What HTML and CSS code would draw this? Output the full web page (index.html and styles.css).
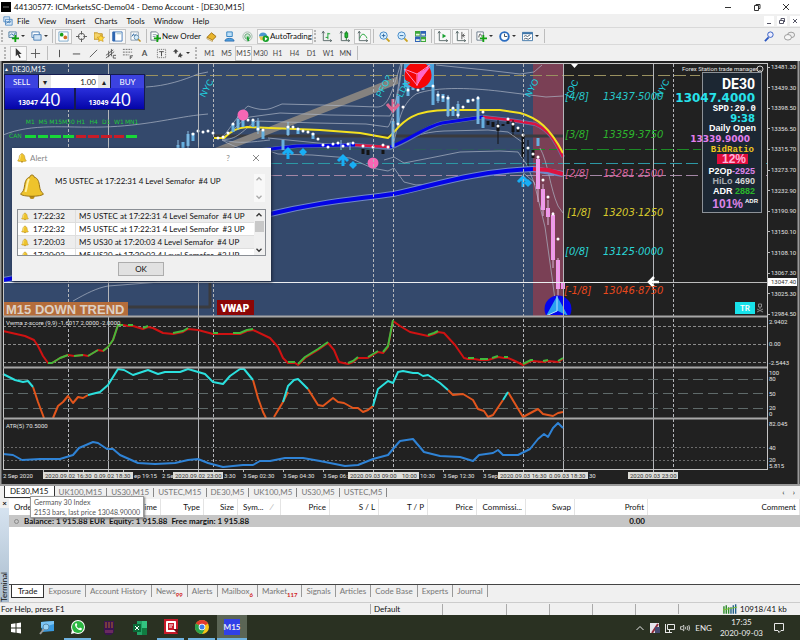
FILE: index.html
```html
<!DOCTYPE html>
<html lang="en">
<head>
  <meta charset="utf-8">
  <title>44130577: ICMarketsSC-Demo04 - Demo Account - [DE30,M15]</title>
  <link rel="stylesheet" href="styles.css">
</head>
<body>
  <!-- Icons that are used more than once -->
  <svg class="defs" width="0" height="0">
    <symbol id="bell" viewBox="0 0 26 26">
      <circle cx="13" cy="22.500" r="2.500" fill="#b98a12"/>
      <path d="M13 1c1.500 0 2 1 2 2 4 1 5 5 5.500 9s1.500 6 4 8c-2 3-21 3-23 0 2.500-2 3.500-4 4-8S7 4 11 3c0-1 .5-2 2-2z" fill="#eec32c" stroke="#9a7415"/>
      <path d="M10 5c-2 3-2 9-3.500 13" fill="none" stroke="#fff0a0" stroke-width="2"/>
    </symbol>
    <symbol id="plus" viewBox="0 0 8 8">
      <path d="M3 0h2v3h3v2H5v3H3V5H0V3h3z" fill="#12a012"/>
    </symbol>
    <symbol id="axes" viewBox="0 0 12 12">
      <path d="M2.500 0v10.500H12M1 2.500 2.500.5 4 2.500M10 9l1.500 1.500L10 12" fill="none" stroke="#566"/>
    </symbol>
  </svg>

  <div class="app">
    <header class="titlebar">
      <svg class="app-icon" viewBox="0 0 10 10"><rect width="10" height="10"/><path d="M2 5h6" stroke="#777"/></svg>
      <span class="title">44130577: ICMarketsSC-Demo04 - Demo Account - [DE30,M15]</span>
      <button class="win" aria-label="Minimize"><svg viewBox="0 0 8 8"><path d="M1 4.500h6" /></svg></button>
      <button class="win" aria-label="Restore"><svg viewBox="0 0 8 8"><path d="M1.500 2.500h4v5h-4zM3 2.500v-1h4v4H5.500"/></svg></button>
      <button class="win" aria-label="Close"><svg viewBox="0 0 8 8"><path d="M1 1l6 6M7 1 1 7"/></svg></button>
    </header>

    <nav class="menubar">
      <svg class="icon" viewBox="0 0 12 12"><path d="M1 1h7v6H1zM3 4h8v7H3z" fill="#dcebf8" stroke="#4a86c0"/><path d="M4 9l2-2 2 1 2-2" fill="none" stroke="#2a66a0"/></svg>
      <button>File</button>
      <button>View</button>
      <button>Insert</button>
      <button>Charts</button>
      <button>Tools</button>
      <button>Window</button>
      <button>Help</button>
      <div class="child-controls">
        <button aria-label="Minimize chart"><svg viewBox="0 0 8 8"><path d="M2 6.500h4"/></svg></button>
        <button aria-label="Restore chart"><svg viewBox="0 0 8 8"><path d="M1.500 3.500h4v3h-4zM3 3V1.500h3.500V5"/></svg></button>
        <button aria-label="Close chart"><svg viewBox="0 0 8 8"><path d="M2 2l4 4M6 2 2 6"/></svg></button>
      </div>
    </nav>

    <div class="toolbar">
      <span class="grip"></span>
      <button class="tool drop" aria-label="New chart"><svg viewBox="0 0 12 12"><path d="M1 1h8v6H1z" fill="#e8f2fa" stroke="#4b7a9c"/><path d="M2 5l2-2 2 2 2-3" fill="none" stroke="#2a66a0"/><use href="#plus" x="4" y="4" width="8" height="8"/></svg></button>
      <button class="tool drop" aria-label="Profiles"><svg viewBox="0 0 12 12"><path d="M1 1h8v6H1z" fill="#fff" stroke="#4a7fb5"/><path d="M3 4h8v6H3z" fill="#cfe2f4" stroke="#4a7fb5"/></svg></button>
      <span class="sep"></span>
      <button class="tool on" aria-label="Market Watch"><svg viewBox="0 0 12 12"><path d="M1 1h10v10H1z" fill="#fff" stroke="#7aa6c8"/><circle cx="4" cy="4" r="2" fill="#18a018"/><circle cx="8" cy="7" r="2" fill="#d07020"/></svg></button>
      <button class="tool" aria-label="Data Window"><svg viewBox="0 0 12 12"><circle cx="6" cy="6" r="3.500" fill="none" stroke="#555"/><path d="M6 0v4M6 8v4M0 6h4M8 6h4" stroke="#555"/></svg></button>
      <button class="tool" aria-label="Navigator"><svg viewBox="0 0 12 12"><path d="M0 2h4l1 1h4v6H0z" fill="#f5d46a" stroke="#c09020"/><path d="M7.500 4l1.200 2.500 2.800.3-2 2 .5 2.700-2.500-1.300L5 11.500l.5-2.700-2-2 2.800-.3z" fill="#ffd83a" stroke="#c08a10" stroke-width=".6"/></svg></button>
      <button class="tool on" aria-label="Terminal"><svg viewBox="0 0 12 12"><path d="M1 1h10v10H1z" fill="#fff" stroke="#3f76b8"/><path d="M2 1v10" stroke="#2f66b0" stroke-width="3"/><path d="M5 3h5" stroke="#9bb"/></svg></button>
      <button class="tool" aria-label="Strategy Tester"><svg viewBox="0 0 12 12"><path d="M1 1h8v9H1z" fill="#fff" stroke="#89a"/><path d="M2 6l2-3 1 3 2-3" fill="none" stroke="#2a66a0"/><circle cx="7" cy="7" r="2.500" fill="#d6ecfa" stroke="#6b93b0"/><path d="M9 9l2.500 2.500" stroke="#c09020" stroke-width="1.500"/></svg></button>
      <span class="sep"></span>
      <button class="tool text"><svg viewBox="0 0 12 12"><path d="M1 1h6l2 2v7H1z" fill="#fff" stroke="#678"/><path d="M3 4h4M3 6h3" stroke="#89a"/><use href="#plus" x="4" y="4" width="8" height="8"/></svg>New Order</button>
      <button class="tool" aria-label="MetaEditor"><svg viewBox="0 0 12 12"><path d="M1 7l5-5 5 4-4 4z" fill="#e9b52c" stroke="#9a6a0c"/><path d="M1 7l6 3v1.500L1 8.500z" fill="#fff4c0" stroke="#9a6a0c" stroke-width=".5"/></svg></button>
      <button class="tool" aria-label="Community"><svg viewBox="0 0 12 12"><path d="M3 1h6v5H3z" fill="#bfe0f8" stroke="#2f7fc0"/><path d="M1 11c0-4 10-4 10 0z" fill="#4aa0e0" stroke="#2f6fb0"/></svg></button>
      <button class="tool" aria-label="Signals"><svg viewBox="0 0 12 12"><circle cx="6" cy="6" r="5" fill="none" stroke="#9fb8a8"/><circle cx="6" cy="6" r="3" fill="#cfe8d4" stroke="#5fa070"/><path d="M6 6l1 5" stroke="#18a030" stroke-width="2"/></svg></button>
      <button class="tool text on"><svg viewBox="0 0 12 12"><path d="M1 6c0-6 9-6 9 0z" fill="#4b97d0"/><path d="M1 6h9l-2 4H3z" fill="#eec24a"/><circle cx="8.500" cy="8.500" r="3.500" fill="#16a028"/><path d="M7.500 6.500v4l3-2z" fill="#fff"/></svg>AutoTrading</button>
      <span class="grip"></span>
      <button class="tool" aria-label="Bar chart"><svg viewBox="0 0 12 12"><use href="#axes" width="12" height="12"/><path d="M7.500 2v7M7.500 3H10M5 7h2.500" stroke="#18a030" fill="none"/></svg></button>
      <button class="tool" aria-label="Candlesticks"><svg viewBox="0 0 12 12"><use href="#axes" width="12" height="12"/><path d="M8 0v10" stroke="#147a20"/><path d="M6.500 2h3v5h-3z" fill="#20c030" stroke="#147a20"/></svg></button>
      <button class="tool on" aria-label="Line chart"><svg viewBox="0 0 12 12"><use href="#axes" width="12" height="12"/><path d="M3 8c2-6 5-6 8 0" stroke="#18a030" fill="none"/></svg></button>
      <span class="sep"></span>
      <button class="tool" aria-label="Zoom in"><svg viewBox="0 0 12 12"><path d="M8 8l3.500 3.500" stroke="#c8a020" stroke-width="2"/><circle cx="5" cy="5" r="4" fill="#d8efff" stroke="#3b83c4"/><path d="M3 5h4M5 3v4" stroke="#2a66a0"/></svg></button>
      <button class="tool" aria-label="Zoom out"><svg viewBox="0 0 12 12"><path d="M8 8l3.500 3.500" stroke="#c8a020" stroke-width="2"/><circle cx="5" cy="5" r="4" fill="#d8efff" stroke="#3b83c4"/><path d="M3 5h4" stroke="#2a66a0"/></svg></button>
      <button class="tool" aria-label="Tile windows"><svg viewBox="0 0 12 12"><path d="M0 0h6v6H0zM6 6h6v6H6z" fill="#3da83a"/><path d="M6 0h6v6H6zM0 6h6v6H0z" fill="#2f62b8"/><path d="M1 3h4v2H1zM7 3h4v2H7zM1 9h4v2H1zM7 9h4v2H7z" fill="#e8f4e0"/></svg></button>
      <span class="sep"></span>
      <button class="tool on" aria-label="Auto scroll"><svg viewBox="0 0 12 12"><use href="#axes" width="12" height="12"/><path d="M6 3v5l4-2.500z" fill="#18a030"/></svg></button>
      <button class="tool on" aria-label="Chart shift"><svg viewBox="0 0 12 12"><use href="#axes" width="12" height="12"/><path d="M7.500 1v8M11 5H8M10 3 8 5l2 2" stroke="#555" fill="none"/></svg></button>
      <span class="sep"></span>
      <button class="tool drop" aria-label="Indicators"><svg viewBox="0 0 12 12"><path d="M1 1h7v9H1z" fill="#fff" stroke="#678"/><path d="M3 7c1-5 2-5 3-1" fill="none" stroke="#444"/><use href="#plus" x="4" y="4" width="8" height="8"/></svg></button>
      <button class="tool drop" aria-label="Periods"><svg viewBox="0 0 12 12"><circle cx="6" cy="6" r="4.700" fill="#fff" stroke="#2a6cc0" stroke-width="2"/><path d="M6 3v3h3" fill="none" stroke="#345"/></svg></button>
      <button class="tool drop" aria-label="Templates"><svg viewBox="0 0 12 12"><path d="M.5 1.500h11v9H.5z" fill="#fff" stroke="#3f76a8"/><path d="M.5 2.500h11" stroke="#3f76a8" stroke-width="2"/><path d="M2 6l2-1 2 1 3-2M2 9l2-1 3 1 3-2" fill="none" stroke="#456"/></svg></button>
      <span class="sep"></span>
      <div class="right-tools">
        <button class="tool" aria-label="Search"><svg viewBox="0 0 12 12"><path d="M5 7 1 11" stroke="#2a56c0" stroke-width="2"/><circle cx="7" cy="4" r="3" fill="#eef" stroke="#2a56c0"/></svg></button>
        <button class="tool" aria-label="Chat"><svg viewBox="0 0 14 12"><ellipse cx="9" cy="4" rx="4.500" ry="3.500" fill="#eee" stroke="#888"/><ellipse cx="5" cy="7" rx="4.500" ry="3.500" fill="#f6f6f6" stroke="#888"/></svg></button>
      </div>
    </div>

    <div class="toolbar periods">
      <span class="grip"></span>
      <button class="tool on" aria-label="Cursor"><svg viewBox="0 0 12 12"><path d="M3 0v9l2-2 2 4 1.500-.7-2-3.800h3z" fill="#333"/></svg></button>
      <button class="tool" aria-label="Crosshair"><svg viewBox="0 0 12 12"><path d="M6 1v10M1 6h10" stroke="#555"/></svg></button>
      <span class="sep"></span>
      <button class="tool" aria-label="Vertical line"><svg viewBox="0 0 12 12"><path d="M6 2v8" stroke="#444"/></svg></button>
      <button class="tool" aria-label="Horizontal line"><svg viewBox="0 0 12 12"><path d="M2 6.500h8" stroke="#444"/></svg></button>
      <button class="tool" aria-label="Trendline"><svg viewBox="0 0 12 12"><path d="M2 10l8-8" stroke="#555"/></svg></button>
      <button class="tool" aria-label="Channel"><svg viewBox="0 0 12 12"><path d="M1 8l8-6M1 11l9-7M4 3v7M7 1v8M9 8h3M9 11h3M9 8v3" stroke="#555" fill="none"/></svg></button>
      <button class="tool" aria-label="Fibonacci"><svg viewBox="0 0 12 12"><path d="M1 1.500h10M1 4.500h10M1 7.500h7" stroke="#666" stroke-dasharray="2 1"/><path d="M9 12V8.500h3M9 10h2" stroke="#555" fill="none"/></svg></button>
      <button class="tool letter">A</button>
      <button class="tool" aria-label="Text label"><svg viewBox="0 0 12 12"><path d="M1.500 1.500h9v9h-9z" fill="none" stroke="#666" stroke-dasharray="1 1"/><path d="M3.500 4h5M6 4v5" stroke="#444" fill="none"/></svg></button>
      <button class="tool drop" aria-label="Arrows"><svg viewBox="0 0 12 12"><path d="M3 1l3 3H4v2H2V4H0zM8 5l1 2 2 .5-2 1.500v2L7.500 9.500 5.500 10l.5-2z" fill="#444"/></svg></button>
      <span class="grip"></span>
      <button class="tf">M1</button>
      <button class="tf">M5</button>
      <button class="tf on">M15</button>
      <button class="tf">M30</button>
      <button class="tf">H1</button>
      <button class="tf">H4</button>
      <button class="tf">D1</button>
      <button class="tf">W1</button>
      <button class="tf">MN</button>
      <span class="sep"></span>
    </div>

    <main class="chart-window">
      <svg class="chart" viewBox="0 61 800 423">
        <defs>
          <clipPath id="price-area"><rect x="3" y="64" width="764" height="251"/></clipPath>
        </defs>
        <rect x="0" y="61" width="800" height="423" fill="#212121"/>
        <rect x="3" y="64" width="530" height="252" fill="#34496c"/>
        <rect x="533" y="64" width="30" height="252" fill="#7a4055"/>

        <g clip-path="url(#price-area)">
          <!-- levels -->
          <path d="M127 307h83M210 282v26M213 136h350" stroke="#3a3b3e" stroke-width="3"/>
          <path d="M215 148 398 76v8L218 154z" fill="#85827f"/>
          <path d="M146 75.500h554" stroke="#9a9160" stroke-dasharray="12 4"/>
          <path d="M404 64h30v23h-30z" fill="#4ba3dc"/>
          <path d="M270 149.500h263" stroke="#2c5a5c" stroke-dasharray="12 4"/>
          <path d="M533 149.500h168" stroke="#1c8a26" stroke-dasharray="12 4"/>
          <path d="M270 163.500h497" stroke="#2c98a5" stroke-dasharray="12 4"/>
          <path d="M270 175.500h497" stroke="#a487a5" stroke-dasharray="12 4"/>

          <!-- bands -->
          <g fill="none" stroke="#aeb6c6" stroke-width=".7">
            <path d="M146 87c20-1 38-7 52-13l10-2"/>
            <path d="M3 135c30-12 60-7 100-8s70-9 95-12l10-1"/>
            <path d="M222 138c10-12 18-26 26-32 8 3 16 5 24 2l10-4 40 1 55 2c10 0 14-10 24-44"/>
            <path d="M222 138c12-6 20-20 28-21l30-4 50 2 60 1c8-14 10-34 12-52"/>
            <path d="M222 139c14 2 20-8 34-18l60 2 50 1 22 3c6-8 10-40 14-64"/>
            <path d="M222 140c14 8 30 14 48 8M222 140c18 4 30 2 48 0"/>
            <path d="M436 65l50 5 34 4 14-2 8-7"/>
            <path d="M394 141c5-18 6-36 22-47 20-8 60-6 90-2l40 5 17-1"/>
            <path d="M268 138l60 6 40 3 24-1c16-8 30-14 52-15l44-1 20 2 14 10"/>
            <path d="M266 150l12 4 34 1 38 3 22 10 16 3 6-3 10 14 12 3 14-1"/>
            <path d="M384 160l10-3 10 6 26-5 30-6 40-1 18 1 9 13 8 20"/>
            <path d="M430 184l50-9 40-5 14 12 11 45 7 50 5 38"/>
            <path d="M540 148c8 14 10 40 18 58l5 7"/>
            <path d="M73 301c14-8 24-13 35-15l52-4"/>
          </g>

          <!-- averages -->
          <g fill="none" stroke-linejoin="round">
            <path d="M3 280c130-22 180-48 267-66 50-12 80-14 123-20 40-8 75-22 140-25l30 5" stroke="#7088c8" stroke-width="6"/>
            <path d="M3 280c130-22 180-48 267-66 50-12 80-14 123-20 40-8 75-22 140-25" stroke="#0404e6" stroke-width="4"/>
            <path d="M533 169l15 1 15 4" stroke="#dc1440" stroke-width="4"/>
            <path d="M262 150l35-4 58-1 35 3c18-6 34-20 52-25l41-6 27 3 25 4c14 6 20 16 28 33" stroke="#6078b0" stroke-width="4"/>
            <path d="M262 150l35-4 58-1M390 147c18-6 34-20 52-24l41-6" stroke="#0404e6" stroke-width="3"/>
            <path d="M355 145l35 2M483 117l27 3 25 4c14 6 20 16 28 33" stroke="#dc1440" stroke-width="2.500"/>
            <path d="M214 138h10c8-8 14-10 23-11l23 1 50 2 40 3 28 5c12-10 16-28 60-28h52l20 3c18 5 30 15 43 40" stroke="#f4e120" stroke-width="2"/>
          </g>

          <!-- candles -->
          <path d="M178 145v6M183 142v6M188 134v12M193 133v8M233 124v8M238 119v9M243 115v12M253 120v7M258 121v10M263 131v8M283 140v10M288 126v9M298 128v6M313 133v6M393 121v26M398 96v28M408 86v10M413 82v8M423 82v8M433 87v18M438 94v7M443 94v8M448 97v19M453 108v8M458 104v12M468 99v4M478 98v26M483 117v11M538 138v8" stroke="#66b0e0" stroke-width="3" fill="none"/>
          <path d="M178 140v12M188 131v17M238 116v14M258 118v16M288 122v14M393 118v30M438 91v12M448 95v22M458 101v17M478 96v28M341 140v10M350 142v8" stroke="#8cbce0" stroke-width="1" fill="none"/>
          <path d="M488 121v4M493 122v5M498 124v7M503 124v2M508 121v3M513 122v10M518 128v4M523 135v22M533 150v8M363 149v5M368 150v5M383 150v4" stroke="#141414" stroke-width="3" fill="none"/>
          <path d="M498 120v24M513 120v15M523 130v30M528 140v26" stroke="#141414" stroke-width="1" fill="none"/>
          <path d="M538 159v30M543 189v21M548 208v9M553 215v45M558 260v29M563 282v7" stroke="#f590ee" stroke-width="4" fill="none"/>
          <path d="M538 157v45M543 184v32M548 200v25M553 212v56M558 258v45" stroke="#d9b6d8" stroke-width="1" fill="none"/>
          <path d="M198 131h0M203 132h0M208 131h0M213 133h0M193 134h0M218 138h0M223 137h0M228 133h0M233 124h0M243 119h0M248 120h0M253 120h0M258 129h0M263 130h0M288 127h0M293 127h0M298 129h0M303 131h0M308 132h0M313 134h0M318 139h0M323 145h0M328 147h0M333 144h0M338 143h0M343 146h0M348 144h0M353 143h0M363 146h0M373 147h0M383 145h0M388 147h0M398 124h0M403 107h0M408 90h0M413 84h0M418 90h0M423 83h0M433 86h0M438 95h0M443 97h0M448 98h0M453 108h0M458 115h0M463 107h0M468 101h0M473 100h0M478 98h0M483 112h0M498 126h0M508 119h0M513 124h0M518 128h0M523 135h0M528 148h0M533 154h0M538 157h0M543 180h0M548 197h0M553 214h0M558 239h0" stroke="#fff" stroke-width="3" stroke-linecap="round"/>

          <!-- semafor marks -->
          <g fill="#f767b5"><circle cx="243" cy="115" r="5.500"/><circle cx="373" cy="163" r="5.500"/></g>
          <path d="M393 99v10M387 104l6 7 6-7" stroke="#dc6590" stroke-width="3" fill="none"/>
          <g fill="none" stroke="#18aef5" stroke-width="3">
            <path d="M288 159v-9M283 154l5-5 5 5M343 166v-10M338 161l5-5 5 5M523 187v-9M518 182l5-5 5 5"/>
          </g>
          <path d="M303 148l4 4-4 4-4-4zM353 161l4 4-4 4-4-4zM528 179l4 4-4 4-4-4z" fill="#18aef5"/>
          <circle cx="418" cy="75" r="13.500" fill="#f50505"/>
          <path d="M404 69l13 5 13-9M417 74v12M404 69l13 16 12-20" fill="none" stroke="#ff8ac8"/>
          <path d="M417 84l1-11 13-7z" fill="#ff66c8"/>
          <circle cx="558" cy="309" r="13.500" fill="#0505f0"/>
          <path d="M557 296l11 20-10-5-12 5z" fill="#2aa0f0"/>
          <path d="M557 296v15M557 311l-11 5" stroke="#b8e0ff" fill="none"/>
          <path d="M571 64h7l-3.500 4z" fill="#fff"/>
        </g>

        <!-- session lines -->
        <path d="M108.500 64v408M198.500 64v408M563.500 64v408M653.500 64v408" stroke="#b4b6ba"/>
        <path d="M68.500 64v408M213.500 64v408M373.500 64v408M393.500 64v408M523.500 64v408M673.500 64v408" stroke="#b4b6ba" stroke-dasharray="3 2"/>
        <path d="M3 282.500h764" stroke="#bcbcbc"/>
        <path d="M3 282.500h636" stroke="#eceef0"/>
        <path d="M659 282h-9M654 277l-5 5 5 5" stroke="#fff" stroke-width="2.500" fill="none"/>

        <g class="session">
          <text transform="translate(205 98) rotate(-62)">NYC</text>
          <text transform="translate(381 98) rotate(-62)">PFO?</text>
          <text transform="translate(402 98) rotate(-62)">LDN</text>
          <text transform="translate(530 98) rotate(-62)">NYO</text>
          <text transform="translate(570 98) rotate(-62)">LOC</text>
          <text transform="translate(661 98) rotate(-62)">NYC</text>
        </g>

        <g class="murrey">
          <text x="565" y="100" fill="#27c7c9">[4/8]</text><text x="603" y="100" fill="#27c7c9">13437·5000</text>
          <text x="565" y="138" fill="#2db52d">[3/8]</text><text x="603" y="138" fill="#2db52d">13359·3750</text>
          <text x="565" y="177" fill="#d6609c">[2/8]</text><text x="603" y="177" fill="#d6609c">13281·2500</text>
          <text x="567" y="216" fill="#d8ca2c">[1/8]</text><text x="603" y="216" fill="#d8ca2c">13203·1250</text>
          <text x="565" y="255" fill="#2ad5d5">[0/8]</text><text x="603" y="255" fill="#2ad5d5">13125·0000</text>
          <text x="564" y="294" fill="#e8481c">[-1/8]</text><text x="603" y="294" fill="#e8481c">13046·8750</text>
        </g>

        <!-- symbol info -->
        <text class="axis" x="682" y="71">Forex Station trade manager</text>
        <circle cx="760" cy="69" r="3" fill="none" stroke="#ccc"/><path d="M758.500 70q1.500 1.500 3 0" stroke="#ccc" fill="none" stroke-width=".6"/>
        <rect x="702.500" y="72.500" width="59" height="140" fill="#1c2733" stroke="#8d9298"/>
        <g class="info">
          <text class="symbol" x="755" y="89">DE30</text>
          <text class="price" x="755" y="102">13047.4000</text>
          <text class="mono" x="756" y="111">SPD:20.0</text>
          <text class="clock" x="755" y="122">9:38</text>
          <text x="756" y="131">Daily Open</text>
          <text class="open" x="750" y="142">13339.9000</text>
          <text class="ratio" x="754" y="152">BidRatio</text>
          <rect x="717" y="154" width="31" height="10" fill="#e00c3c"/>
          <text class="percent" x="746" y="163">12%</text>
          <text x="755" y="174">P2Op<tspan fill="#dc84e8">-2925</tspan></text>
          <text x="755" y="184" fill="#a8adb2">HiLo <tspan fill="#d6d6d6">4690</tspan></text>
          <text x="755" y="194">ADR <tspan fill="#2ab52a">2882</tspan></text>
          <text class="total" x="743" y="208">101%</text>
          <text class="sup" x="758" y="203">ADR</text>
        </g>
        <rect x="735" y="302" width="20" height="12" fill="#18e2ea"/>
        <text class="tr" x="745" y="311">TR</text>
        <path d="M758.500 304h3v3h-3zM760 307v2M757 309l6 3M763 309l-6 3" stroke="#888" fill="none"/>

        <!-- trend labels -->
        <rect x="4" y="302" width="124" height="14" fill="#b56d3b"/>
        <text class="trend" x="6" y="314">M15 DOWN TREND</text>
        <rect x="217" y="300" width="37" height="15" fill="#8c0606"/>
        <text class="vwap" x="235" y="312">VWAP</text>

        <!-- sub windows: levels -->
        <path d="M3 326.500h764M3 344.500h764M3 362.500h764" stroke="#8b8b8b" stroke-dasharray="3 2" fill="none"/>
        <path d="M3 379.500h764M3 393.500h764M3 408.500h764" stroke="#5f6a6a" stroke-dasharray="10 5" fill="none"/>
        <path d="M3 447.500h764M3 460.500h764" stroke="#6b6b6b" stroke-dasharray="2 2" fill="none"/>

        <!-- z-score -->
        <g fill="none" stroke-width="2" stroke-linejoin="round">
          <path stroke="#cf1212" d="M3 331l22 5 9 4 4 6 5 10 5 7 4 0 8-5 8-3 6 1 9-1 5 1 10-6 5 1 5-4 5-7 5-15h5l5 1h5l10 3 5-2 5 1 10 5 10 1 10-2 5-3 10 1 15 4h20l7 0 7-3 6-1 17 8 8 9 5 11 5 5h7l3 2 7-7 13-8 10-7 6 7 5 12 9 2 5-2 5-4h10l10-6 5 1 5-6 5-26 7 5 10 6 18 4 6-2 4-2 6 1 11 12 9 13 4 1h6l6 1h8l10-3 6 1h4l7 3 8 4 8-4h2l10 1 5-1 10 1 5-3"/>
          <path stroke="#43b83c" d="M48 363h4l8-5 8-3M74 356l9-1M88 356l10-6M103 351l5-4 5-7 5-15h5M128 325h5M143 328l5-2M173 333l10-2 5-3M213 333h5M233 333h7l7-3 6-1M288 362h7M298 364l7-7 13-8 10-7M348 363l5-2 5-4M368 357l10-6M383 352l5-6 5-26M428 335l6-2 4-2M468 358h6M480 359h8M492 358l6-2M504 357h4M523 364l8-4h2M543 361l5-1M558 361l5-3"/>
        </g>

        <!-- oscillator -->
        <g fill="none" stroke-width="2" stroke-linejoin="round">
          <path stroke="#e2551c" d="M33 387l5 15 6 16M53 418l5-12 5-4 5-6 5 7 5-6 5 1 5-3M253 380l5 18 5 14 3 6M274 417l9-15 5-10M308 389l10 16 5 1 10-8 5 4 6 1 9 5h5l5 4 5-2 5-4M448 390l5 5 10-1 10 6 5 9 6 2 4 6 5-2 10-15M508 392l15 25 15-8 5 5 10 2 5-3 5-1"/>
          <path stroke="#2be0de" d="M3 374l12 6 8 2 5-1 5 6M88 395l12-3 8-7 10-16 6 1 9 5 15-5 10 4 7-2h15l8-3 17 5 8 8 10 2 7-8 10-7h4l9 11M283 402l5-16 6-6 4-1 10 10M373 406l5-17 10-8 5 2 5-11 5-1 10 2h5l5 3 5-1 12 8 8 7M503 400l5-8"/>
        </g>

        <!-- ATR -->
        <path fill="none" stroke="#2f83d6" stroke-width="2" stroke-linejoin="round" d="M3 454L13 455L22 460L40 459L60 459L73 455L79 448L93 442L98 443L107 449L113 449L120 455L138 463L155 464L175 463L188 460L198 459L208 463L223 467L243 465L253 465L260 461L270 461L285 458L303 458L320 461L345 466L358 465L373 459L388 455L393 449L400 441L413 439L424 452L440 456L460 457L473 461L479 455L493 453L498 450L503 455L518 455L530 449L538 439L544 434L548 437L553 428L558 423L563 428"/>

        <!-- window frames -->
        <path d="M3 63.500h764M3.500 63v407M767.500 63v407M3 469.500h764" stroke="#c6c6c6" fill="none"/>
        <path d="M3 316.500h764M3 367.500h764M3 418.500h764" stroke="#a7a7a7" stroke-width="2" fill="none"/>
        <path d="M.5 61v423M798.500 61v423" stroke="#9a9a9a" stroke-width="2"/>

        <g class="axis">
          <text x="6" y="325">Vwma z-score (9,9) -1.6017 2.0000 -2.0000</text>
          <text x="6" y="428">ATR(5) 70.5000</text>
          <text x="771" y="69">13481.30</text>
          <text x="771" y="90">13439.30</text>
          <text x="771" y="110">13398.50</text>
          <text x="771" y="131">13356.50</text>
          <text x="771" y="151">13315.70</text>
          <text x="771" y="172">13273.70</text>
          <text x="771" y="193">13232.90</text>
          <text x="771" y="213">13190.90</text>
          <text x="771" y="234">13150.10</text>
          <text x="771" y="255">13108.10</text>
          <text x="771" y="275">13067.30</text>
          <text x="771" y="296">13025.30</text>
          <text x="771" y="316">12984.50</text>
          <text x="769" y="324">2.9402</text>
          <text x="769" y="346">0.00</text>
          <text x="769" y="365">-2.5443</text>
          <text x="769" y="375">100</text>
          <text x="769" y="381">80</text>
          <text x="769" y="396">50</text>
          <text x="769" y="410">20</text>
          <text x="769" y="416">0</text>
          <text x="769" y="426">82.045</text>
          <text x="769" y="450">40</text>
          <text x="769" y="462">20</text>
          <text x="769" y="468">5.815</text>

          <text x="3" y="478">2 Sep 2020</text>
          <text x="134" y="478">ep 19:15</text>
          <text x="162" y="478">2 Se</text>
          <text x="224" y="478">3:30</text>
          <text x="243" y="478">3 Sep 02:30</text>
          <text x="283" y="478">3 Sep 04:30</text>
          <text x="323" y="478">3 Sep 06:</text>
          <text x="420" y="478">10:30</text>
          <text x="443" y="478">3 Sep 12:30</text>
          <text x="483" y="478">3 Sep</text>
          <text x="589" y="478">30</text>
        </g>
        <rect x="768" y="278" width="29" height="8" fill="#fff"/>
        <text class="axis dark" x="771" y="284">13047.40</text>
        <path d="M767 67.500h3M767 87.500h3M767 108.500h3M767 128.500h3M767 149.500h3M767 170.500h3M767 190.500h3M767 211.500h3M767 231.500h3M767 252.500h3M767 273.500h3M767 293.500h3M767 314.500h3M43.500 470v2M83.500 470v2M123.500 470v2M163.500 470v2M243.500 470v2M283.500 470v2M323.500 470v2M443.500 470v2M483.500 470v2" stroke="#bbb"/>
        <g fill="#dcdcd8">
          <rect x="43" y="472" width="90" height="7"/>
          <rect x="173" y="472" width="50" height="7"/>
          <rect x="348" y="472" width="71" height="7"/>
          <rect x="498" y="472" width="90" height="7"/>
          <rect x="628" y="472" width="50" height="7"/>
        </g>
        <g class="axis dark">
          <text x="45" y="478">2020.09.02 16:30</text><text x="94" y="478">0.09.02 18:30</text>
          <text x="175" y="478">2020.09.02 23:00</text>
          <text x="350" y="478">2020.09.03 09:00</text><text x="402" y="478">10:00</text>
          <text x="500" y="478">2020.09.03 16:30</text><text x="549" y="478">0.09.03 18:30</text>
          <text x="630" y="478">2020.09.03 23:00</text>
        </g>
      </svg>

      <section class="one-click" aria-label="One click trading">
        <div class="pair"><span class="tri">▲</span>DE30,M15</div>
        <div class="order">
          <button class="sell">SELL</button>
          <div class="lots">
            <button aria-label="Less">▾</button>
            <input type="text" value="1.00" aria-label="Volume">
            <button aria-label="More">▴</button>
          </div>
          <button class="buy">BUY</button>
        </div>
        <div class="quotes">
          <div class="quote">13047<b>40</b></div>
          <div class="quote">13049<b>40</b></div>
        </div>
      </section>

      <section class="can">
        <div class="can-row can-names"><span></span><span>M1</span><span>M5</span><span>M15</span><span>M30</span><span>H1</span><span>H4</span><span>D1</span><span>W1</span><span>MN1</span></div>
        <div class="can-row can-bars"><span>CAN</span><i></i><i></i><i></i><i></i><i class="down"></i><i class="down"></i><i class="down"></i><i class="down"></i><i></i></div>
      </section>

      <section class="alert" role="dialog" aria-label="Alert">
        <header class="alert-title">
          <svg class="icon"><use href="#bell"/></svg>
          <span>Alert</span>
          <button aria-label="Help">?</button>
          <button aria-label="Close alert"><svg viewBox="0 0 8 8"><path d="M1 1l6 6M7 1 1 7"/></svg></button>
        </header>
        <div class="alert-message">
          <svg class="bell"><use href="#bell"/></svg>
          <p>M5 USTEC at 17:22:31 4 Level Semafor&nbsp; #4 UP</p>
          <div class="scroll faint"><svg viewBox="0 0 8 8"><path d="M2 5l2-2 2 2"/></svg><svg viewBox="0 0 8 8"><path d="M2 3l2 2 2-2"/></svg></div>
        </div>
        <div class="alert-list">
          <table>
            <tr><td><svg class="small-bell"><use href="#bell"/></svg>17:22:32</td><td>M5 USTEC at 17:22:31 4 Level Semafor&nbsp; #4 UP</td></tr>
            <tr><td><svg class="small-bell"><use href="#bell"/></svg>17:22:32</td><td>M5 USTEC at 17:22:31 4 Level Semafor&nbsp; #3 UP</td></tr>
            <tr><td><svg class="small-bell"><use href="#bell"/></svg>17:20:03</td><td>M5 US30 at 17:20:03 4 Level Semafor&nbsp; #4 UP</td></tr>
            <tr><td><svg class="small-bell"><use href="#bell"/></svg>17:20:03</td><td>M5 US30 at 17:20:03 4 Level Semafor&nbsp; #3 UP</td></tr>
          </table>
          <div class="scroll"><svg viewBox="0 0 8 8"><path d="M2 5l2-2 2 2"/></svg><span class="thumb"></span><svg viewBox="0 0 8 8"><path d="M2 3l2 2 2-2"/></svg></div>
        </div>
        <button class="ok">OK</button>
      </section>
    </main>

    <nav class="chart-tabs">
      <button class="active">DE30,M15</button>
      <button>UK100,M15</button>
      <button>US30,M15</button>
      <button>USTEC,M15</button>
      <button>DE30,M5</button>
      <button>UK100,M5</button>
      <button>US30,M5</button>
      <button>USTEC,M5</button>
      <span class="tab-scroll">‹ &nbsp; &nbsp;›</span>
      <div class="tooltip">Germany 30 Index<br>2153 bars, last price 13048.90000</div>
    </nav>

    <section class="terminal">
      <div class="terminal-side">
        <button aria-label="Close terminal">×</button>
        <span>Terminal</span>
      </div>
      <div class="terminal-main">
        <table class="trades">
          <colgroup><col class="c-order"><col class="c-time"><col class="c-type"><col class="c-size"><col class="c-symbol"><col class="c-price"><col class="c-price"><col class="c-price"><col class="c-price"><col class="c-price"><col class="c-price"><col class="c-profit"><col></colgroup>
          <thead>
            <tr><th class="left">Order</th><th>Time</th><th>Type</th><th>Size</th><th class="left">Sym... &nbsp; <i>∕</i></th><th>Price</th><th>S / L</th><th>T / P</th><th>Price</th><th>Commissi...</th><th>Swap</th><th>Profit</th><th>Comment</th></tr>
          </thead>
          <tbody>
            <tr><td colspan="11" class="left"><span class="dot"></span>Balance: 1 915.88 EUR &nbsp;Equity: 1 915.88 &nbsp;Free margin: 1 915.88</td><td>0.00</td><td></td></tr>
          </tbody>
        </table>
        <nav class="terminal-tabs">
          <button class="active">Trade</button>
          <button>Exposure</button>
          <button>Account History</button>
          <button>News<sub>99</sub></button>
          <button>Alerts</button>
          <button>Mailbox<sub>6</sub></button>
          <button>Market<sub>117</sub></button>
          <button>Signals</button>
          <button>Articles</button>
          <button>Code Base</button>
          <button>Experts</button>
          <button>Journal</button>
        </nav>
      </div>
    </section>

    <footer class="statusbar">
      <span class="help">For Help, press F1</span>
      <span class="profile">Default</span>
      <span class="cell wide"></span>
      <span class="cell"></span>
      <span class="cell"></span>
      <span class="cell"></span>
      <span class="cell"></span>
      <span class="traffic"><svg viewBox="0 0 16 10"><path d="M1 2v8M3.500 1v9M6 3v7" stroke="#2c8a2c" stroke-width="1.500"/><path d="M8.500 3v7M11 1v9M13.500 0v10" stroke="#23618a" stroke-width="1.500"/><path d="M0 6l15-3" stroke="#7ac030"/></svg>10918/41 kb</span>
    </footer>

    <footer class="taskbar">
      <button aria-label="Start"><svg viewBox="0 0 16 16"><path d="M3 4l4.500-.7v4.200H3zM8.500 3.200 13 2.500v5H8.500zM3 8.500h4.500v4.200L3 12zM8.500 8.500H13v5l-4.500-.7z" fill="#fff"/></svg></button>
      <button aria-label="Desktop"><svg viewBox="0 0 16 16"><path d="M2 2l13-1v10L3 12z" fill="#3a9be0"/><path d="M2 2l13-1v3L2 8z" fill="#79c4f4"/><circle cx="7" cy="7" r="3" fill="#9ad4f6" stroke="#5a8aaa"/><path d="M5 9l-4 5" stroke="#9a9a9a" stroke-width="2"/></svg></button>
      <button class="open" aria-label="WhatsApp"><svg viewBox="0 0 16 16"><circle cx="8" cy="8" r="7" fill="#fff"/><path d="M1 15l1-4 3 3z" fill="#fff"/><circle cx="8" cy="8" r="6" fill="#2cb742"/><path d="M5.500 4.500c-2 2 3 8 6 6.500l.5-1.500-2-1-1 1c-1-.3-2-1.500-2.500-2.500l.8-1-.8-2z" fill="#fff"/></svg></button>
      <button aria-label="Game"><svg viewBox="0 0 16 16"><path d="M3 1h10v11l-3 3H5l-2-3z" fill="#3b1450"/><path d="M5 2v6M8 2v6M11 2v6" stroke="#8a4a38" stroke-width="1.500"/><path d="M4 10h8v3H4z" fill="#6a2a60"/></svg></button>
      <button aria-label="Excel"><svg viewBox="0 0 16 16"><path d="M5 1h10v14H5z" fill="#21a366"/><path d="M10 1h5v7h-5z" fill="#33c481"/><path d="M10 8h5v7h-5z" fill="#107c41"/><path d="M1 4h8v8H1z" fill="#0b6b38"/><path d="M3 6l4 4M7 6l-4 4" stroke="#fff"/></svg></button>
      <button class="open" aria-label="Reader"><svg viewBox="0 0 16 16"><path d="M1 0h14v15H1z" fill="#c81a2a"/><path d="M3.500 2.500h9v10h-9z" fill="#fff" stroke="#fff"/><path d="M5 4h6v7H5z" fill="#c81a2a"/><path d="M6 6h4M6 8h3" stroke="#fff"/><path d="M10 10h5v5" fill="#701018"/></svg></button>
      <button class="open" aria-label="Chrome"><svg viewBox="0 0 16 16"><circle cx="8" cy="8" r="7" fill="#f5c518"/><path d="M8 8 1.900 4.500A7 7 0 0 1 14.100 4.500z" fill="#e23a2e"/><path d="M8 8 1.900 4.500A7 7 0 0 0 8 15l3-5z" fill="#2ba24c"/><circle cx="8" cy="8" r="3.300" fill="#fff"/><circle cx="8" cy="8" r="2.500" fill="#3f7fe8"/></svg></button>
      <button class="open current"><span class="m15">M15</span></button>
      <div class="tray">
        <svg viewBox="0 0 10 10"><path d="M1.500 7 5 3.500 8.500 7" fill="none" stroke="#e8e8e8"/></svg>
        <svg viewBox="0 0 10 10"><path d="M0 0h9v10H0z" fill="#e6e6ee"/><path d="M2 10l6-9" stroke="#902838" stroke-width="2"/><path d="M5 4h5v6H5z" fill="#454a70"/></svg>
        <svg viewBox="0 0 10 10"><path d="M2.500 1.500h7v5h-7zM0 9.500h7M4.500 7v2.500M.5 1v8" fill="none" stroke="#e8e8e8"/></svg>
        <svg viewBox="0 0 12 10"><path d="M.5 3.500h2l2-2v7l-2-2h-2zM6.500 3.500q1 1.500 0 3M8.500 2.500q2 2.500 0 5M10.500 1.500q2 3.500 0 7" fill="none" stroke="#e8e8e8"/></svg>
        <span>ENG</span>
        <div class="clock-box">17:35<br>2020-09-03</div>
        <svg class="note" viewBox="0 0 12 12"><path d="M1.500 1.500h9v7H8l-2 2-1-2H1.500z" fill="none" stroke="#e8e8e8"/></svg>
      </div>
    </footer>
  </div>
</body>
</html>
```
FILE: styles.css
```css
* {
  box-sizing: border-box;
}
body {
  margin: 0;
  font-family: Lato, "Open Sans", sans-serif;
  font-size: 8px;
  color: #111;
  background: #f0f0f0;
}
button, input {
  font: inherit;
  color: inherit;
  margin: 0;
  padding: 0;
  border: 0;
  background: none;
}
table {
  font-size: inherit;
}
svg {
  display: block;
  flex: none;
}
.defs {
  position: absolute;
}
.app {
  display: flex;
  flex-direction: column;
  min-height: 100vh;
}

/* window head */
.titlebar {
  display: flex;
  align-items: center;
  height: 14px;
  background: #fff;
}
.app-icon {
  width: 10px;
  height: 10px;
  margin: 0 3px 0 1px;
}
.title {
  flex: 1;
  white-space: nowrap;
}
.win {
  display: flex;
  justify-content: center;
  width: 29px;
}
.win svg, .alert-title button svg {
  width: 8px;
  height: 8px;
  fill: none;
  stroke: #333;
}
.menubar {
  display: flex;
  align-items: center;
  height: 13px;
  padding-left: 3px;
}
.icon {
  width: 10px;
  height: 10px;
}
.menubar > button {
  margin-left: 2px;
  padding: 0 2px;
}
.menubar > button + button {
  margin-left: 5px;
}
.child-controls {
  display: flex;
  gap: 3px;
  margin-left: auto;
}
.child-controls button {
  width: 10px;
  height: 10px;
  background: #fff;
}
.child-controls svg {
  width: 8px;
  height: 8px;
  margin: 1px;
  fill: none;
  stroke: #556;
}

/* toolbars */
.toolbar {
  display: flex;
  align-items: center;
  height: 17px;
  padding-left: 1px;
  gap: 1px;
  border-top: 1px solid #d9d9d9;
}
.grip {
  width: 3px;
  height: 12px;
  border-left: 2px dotted #b5b5b5;
}
.sep {
  width: 1px;
  height: 14px;
  margin: 0 1px;
  background: #bdbdbd;
}
.tool {
  display: flex;
  align-items: center;
  justify-content: center;
  gap: 2px;
  width: 17px;
  height: 15px;
  border: 1px solid transparent;
}
.tool svg {
  width: 11px;
  height: 11px;
}
.tool.on, .tf.on {
  background: #f8f8f8;
  border: 1px solid #c6c6c6;
}
.tool.text {
  width: auto;
  gap: 1px;
}
.tool.drop {
  width: 22px;
}
.tool.drop::after {
  content: "";
  border: 2px solid transparent;
  border-top-color: #333;
  border-bottom: 0;
}
.tool.letter {
  font-weight: bold;
  color: #555;
}
.right-tools {
  display: flex;
  gap: 3px;
  margin-left: auto;
  padding-right: 2px;
}
.periods {
  gap: 0;
}
.periods .sep, .periods .grip {
  margin: 0 3px;
}
.tf {
  width: 17px;
  height: 15px;
  font-size: 7px;
  color: #444;
}

/* chart */
.chart-window {
  position: relative;
  overflow: hidden;
}
.chart {
  width: 100%;
  height: auto;
}
.chart .axis {
  font-family: Roboto, "Open Sans", sans-serif;
  font-size: 6px;
  fill: #e4e4e4;
}
.chart .dark {
  fill: #333;
}
.session text {
  font-family: "Liberation Sans", sans-serif;
  font-size: 9px;
  fill: #20d5e0;
}
.murrey text {
  font-family: "DejaVu Sans", sans-serif;
  font-size: 10px;
  font-style: italic;
}
.info text {
  font-family: "Liberation Sans", sans-serif;
  font-size: 9px;
  font-weight: bold;
  text-anchor: end;
}
.info {
  fill: #fff;
}
.info .symbol {
  font-family: Roboto, sans-serif;
  font-size: 14px;
}
.info .price {
  font-family: "DejaVu Sans", sans-serif;
  font-size: 12px;
  fill: #27e3ec;
}
.info .mono {
  font-family: "Liberation Mono", monospace;
}
.info .clock {
  font-family: "DejaVu Sans", sans-serif;
  font-size: 10px;
  fill: #27e3ec;
}
.info .open {
  font-family: "DejaVu Sans", sans-serif;
  fill: #e47fee;
}
.info .ratio {
  font-family: "Liberation Mono", monospace;
  fill: #f0c81e;
}
.info .percent {
  font-size: 12px;
  fill: #ffb0d8;
}
.info .total {
  font-size: 12px;
  fill: #dc84e8;
}
.info .sup {
  font-size: 6px;
}
.tr {
  font-size: 8px;
  font-weight: bold;
  text-anchor: middle;
  fill: #fff;
}
.trend {
  font-family: "Liberation Sans", sans-serif;
  font-size: 13px;
  font-weight: bold;
  fill: #ddd0c4;
}
.vwap {
  font-family: Roboto, sans-serif;
  font-size: 10px;
  font-weight: 900;
  text-anchor: middle;
  fill: #fff;
}

/* one click trading */
.one-click {
  position: absolute;
  left: 4px;
  top: 3px;
  width: 141px;
  color: #fff;
}
.pair {
  display: flex;
  align-items: center;
  gap: 3px;
  height: 10px;
  font-size: 7px;
}
.tri {
  font-size: 5px;
}
.order, .quotes {
  display: flex;
  background: #151b50;
}
.order {
  height: 14px;
  gap: 1px;
  padding: 1px 1px 0;
}
.sell, .buy {
  flex: 1;
  background: #3c42e0;
}
.lots {
  display: flex;
  width: 71px;
  color: #222;
  background: #e6e6e6;
}
.lots button {
  width: 12px;
}
.lots input {
  flex: 1;
  min-width: 0;
  padding-right: 2px;
  text-align: right;
  background: #fff;
}
.quotes {
  gap: 2px;
  padding: 0 1px 1px;
}
.quote {
  flex: 1;
  display: flex;
  align-items: flex-end;
  justify-content: center;
  gap: 2px;
  height: 21px;
  font: bold 7px/12px "Open Sans", sans-serif;
  background: linear-gradient(#2a30dc, #0404a8);
}
.quote b {
  font: 18px/20px "Open Sans", sans-serif;
}
.can {
  position: absolute;
  left: 9px;
  top: 56px;
  width: 128px;
  font: 6px/10px "DejaVu Sans", sans-serif;
  color: #1fc83a;
}
.can-row {
  display: grid;
  grid-template-columns: 14px repeat(9, minmax(0, 1fr));
  align-items: center;
  gap: 2px;
}
.can-names {
  justify-items: center;
}
.can-bars {
  margin-top: 4px;
}
.can-bars i {
  height: 3px;
  background: #18d838;
}
.can-bars .down {
  background: #c81c28;
}

/* alert dialog */
.alert {
  position: absolute;
  left: 12px;
  top: 87px;
  width: 259px;
  display: flex;
  flex-direction: column;
  background: #f0f0f0;
  box-shadow: 1px 1px 3px #1a2236;
}
.alert-title {
  display: flex;
  align-items: center;
  height: 19px;
  padding: 0 5px;
  gap: 3px;
  color: #888;
  background: #fff;
}
.alert-title span {
  flex: 1;
}
.alert-title button {
  display: flex;
  justify-content: center;
  width: 20px;
}
.alert-title button + button {
  margin-left: 5px;
}
.alert-title button svg {
  stroke: #888;
}
.alert-message {
  display: flex;
  align-items: flex-start;
  gap: 10px;
  height: 42px;
  padding: 7px 6px 0 7px;
}
.bell {
  width: 26px;
  height: 26px;
}
.alert-message p {
  flex: 1;
  margin: 2px 0 0;
}
.scroll {
  display: flex;
  flex-direction: column;
  width: 11px;
  background: #f0f0f0;
}
.scroll svg {
  width: 10px;
  height: 10px;
  fill: none;
  stroke: #333;
}
.scroll svg:last-child {
  margin-top: auto;
}
.scroll.faint {
  height: 28px;
  background: #f8f8f8;
}
.scroll.faint svg {
  stroke: #aaa;
}
.thumb {
  height: 11px;
  margin: 1px;
  background: #c8c8c8;
}
.alert-list {
  display: flex;
  height: 47px;
  margin: 0 5px;
  overflow: hidden;
  border: 1px solid #8a8e94;
  background: #fff;
}
.alert-list table {
  flex: 1;
  height: 52px;
  border-spacing: 0;
}
.alert-list td {
  height: 13px;
  padding: 0 3px;
  border-bottom: 1px solid #dedede;
  line-height: 12px;
  white-space: nowrap;
}
.alert-list td:first-child {
  width: 58px;
  border-right: 1px solid #dedede;
}
.alert-list tr:nth-child(odd) {
  background: #ededed;
}
.small-bell {
  display: inline-block;
  width: 8px;
  height: 9px;
  margin-right: 4px;
  vertical-align: middle;
}
.ok {
  width: 46px;
  height: 14px;
  margin: 6px 0 5px 106px;
  border: 1px solid #adadad;
  background: #e1e1e1;
}

/* chart tabs */
.chart-tabs {
  position: relative;
  display: flex;
  align-items: center;
  height: 14px;
  padding-left: 4px;
  border-top: 2px solid #9a9a9a;
}
.chart-tabs button {
  padding: 0 4px;
  line-height: 9px;
  color: #777;
  border-right: 1px solid #888;
}
.chart-tabs .active {
  padding: 0 5px;
  line-height: 11px;
  color: #111;
  background: #fff;
  border: 1px solid #333;
  border-top: 0;
}
.tab-scroll {
  margin-left: auto;
  padding-right: 5px;
}
.tooltip {
  position: absolute;
  z-index: 2;
  left: 30px;
  top: 10px;
  padding: 0 3px;
  font-size: 7px;
  line-height: 10px;
  white-space: nowrap;
  color: #555;
  background: #fff;
  border: 1px solid #999;
  box-shadow: 1px 1px 2px #777;
}

/* terminal */
.terminal {
  flex: 1;
  display: flex;
  padding-top: 1px;
}
.terminal-side {
  display: flex;
  flex-direction: column;
  align-items: center;
  justify-content: space-between;
  width: 9px;
  background: linear-gradient(#f0f0f0 9px, #d6e3f0 9px, #a9bccd);
}
.terminal-side button {
  line-height: 9px;
  font-weight: bold;
}
.terminal-side span {
  line-height: 9px;
  writing-mode: vertical-rl;
  transform: rotate(180deg);
}
.terminal-main {
  flex: 1;
  display: flex;
  flex-direction: column;
  background: #fff;
}
.trades {
  width: 100%;
  table-layout: fixed;
  border-spacing: 0;
}
.trades th {
  height: 16px;
  padding: 0 3px;
  font-weight: normal;
  text-align: right;
  white-space: nowrap;
  border-right: 1px solid #e4e4e4;
}
.trades td {
  height: 12px;
  padding: 0 3px;
  font-weight: bold;
  text-align: right;
  background: #c6c6c6;
}
.trades .left {
  text-align: left;
}
.trades th.left {
  padding-left: 5px;
}
.trades i {
  color: #999;
}
.dot {
  display: inline-block;
  width: 5px;
  height: 5px;
  margin: 0 5px 0 2px;
  border: 1px solid #888;
  border-radius: 50%;
}
.c-order { width: 102px; }
.c-time { width: 50px; }
.c-type { width: 43px; }
.c-size { width: 34px; }
.c-symbol { width: 43px; }
.c-price { width: 49px; }
.c-profit { width: 73px; }
.terminal-tabs {
  display: flex;
  align-items: flex-start;
  height: 18px;
  margin-top: auto;
  padding-left: 2px;
  border-top: 1px solid #444;
  background: #f0f0f0;
}
.terminal-tabs button {
  padding: 0 4px;
  line-height: 12px;
  color: #777;
}
.terminal-tabs button + button {
  border-right: 1px solid #999;
}
.terminal-tabs .active {
  padding: 0 6px;
  color: #111;
  background: #fff;
  border: 1px solid #333;
  border-top: 0;
}
.terminal-tabs sub {
  font-size: 6px;
  font-weight: bold;
  line-height: 0;
  color: #d02020;
}

/* status bar */
.statusbar {
  display: flex;
  align-items: center;
  height: 13px;
  border-top: 1px solid #ccc;
}
.help {
  flex: 1;
  padding-left: 1px;
}
.profile {
  width: 72px;
  padding-left: 3px;
  border-left: 1px solid #aaa;
}
.cell {
  width: 43px;
  height: 11px;
  border-left: 1px solid #aaa;
}
.cell.wide {
  width: 64px;
}
.traffic {
  display: flex;
  align-items: center;
  gap: 2px;
  width: 122px;
  padding-left: 44px;
  border-left: 1px solid #aaa;
}
.traffic svg {
  width: 15px;
  height: 10px;
}

/* taskbar */
.taskbar {
  display: flex;
  height: 25px;
  color: #eee;
  background: #2a3122;
}
.taskbar > button {
  display: flex;
  align-items: center;
  justify-content: center;
  width: 31px;
}
.taskbar > button svg {
  width: 16px;
  height: 16px;
}
.taskbar .open {
  width: 27px;
  margin: 0 2px;
  border-bottom: 2px solid #6fb2e0;
}
.taskbar .current {
  width: 30px;
  margin: 0;
  background: #5b6555;
}
.m15 {
  padding: 3px 0;
  font-weight: bold;
  background: #3040e8;
}
.tray {
  display: flex;
  align-items: center;
  gap: 5px;
  margin-left: auto;
  padding-right: 15px;
}
.tray svg {
  width: 10px;
  height: 10px;
}
.tray .note {
  width: 12px;
  height: 12px;
}
.clock-box {
  margin: 0 5px 0 3px;
  text-align: center;
  line-height: 11px;
}
```
